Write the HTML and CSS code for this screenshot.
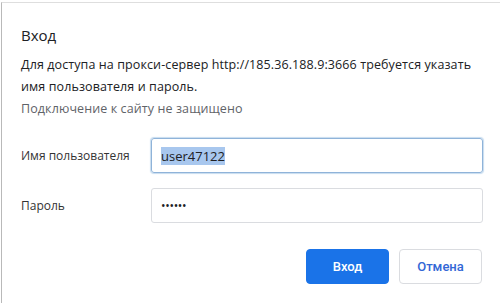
FILE: index.html
```html
<!DOCTYPE html>
<html lang="ru">
<head>
<meta charset="utf-8">
<link rel="stylesheet" href="styles.css">
</head>
<body>
<div class="dialog">
  <h1 class="title">Вход</h1>
  <p class="msg">Для доступа на прокси-сервер http://185.36.188.9:3666 требуется указать имя пользователя и пароль.</p>
  <p class="warn">Подключение к сайту не защищено</p>
  <div class="form">
    <label class="label">Имя пользователя</label>
    <div class="field focused"><span class="sel">user47122</span></div>
    <label class="label">Пароль</label>
    <div class="field"><span class="dots">••••••</span></div>
  </div>
  <div class="actions">
    <button class="btn primary">Вход</button>
    <button class="btn secondary">Отмена</button>
  </div>
</div>
</body>
</html>
```
FILE: styles.css
```css
html, body {
  margin: 0;
  padding: 0;
  background: #fff;
}
body {
  width: 500px;
  height: 303px;
  overflow: hidden;
  font-family: "Open Sans", "Noto Sans", sans-serif;
  color: #202124;
}
.dialog {
  margin: 2px 0 0 1px;
  border-left: 1px solid #b9b9b9;
  border-top: 1px solid #dedede;
  height: 301px;
  box-sizing: border-box;
  padding: 22px 18px 0 19px;
}
.title {
  margin: 0;
  font-size: 15px;
  font-weight: 400;
  line-height: 20px;
  color: #202124;
}
.msg {
  margin: 9px 0 0;
  font-size: 12.5px;
  letter-spacing: 0.1px;
  line-height: 22px;
  width: 474px;
  color: #202124;
}
.warn {
  margin: 0;
  font-size: 12.5px;
  letter-spacing: 0.1px;
  line-height: 22px;
  color: #5f6368;
}
.form {
  display: grid;
  grid-template-columns: 130px 332px;
  row-gap: 15px;
  align-items: center;
  margin-top: 18px;
}
.label {
  font-size: 12px;
  color: #333;
}
.field {
  height: 35px;
  box-sizing: border-box;
  border: 1px solid #dadce0;
  border-radius: 3px;
  display: flex;
  align-items: center;
  padding-left: 9px;
  font-size: 13px;
  color: #202124;
}
.field.focused {
  border: 1px solid #8fb3d9;
  box-shadow: 0 0 1px 1px #c7dcef;
}
.sel {
  background: #a8c7ee;
  line-height: 18px;
}
.dots {
  font-size: 12px;
  letter-spacing: -0.3px;
}
.actions {
  display: flex;
  justify-content: flex-end;
  gap: 10px;
  margin-top: 26px;
}
.btn {
  height: 35px;
  width: 83px;
  border-radius: 4px;
  font-family: "Roboto", "Open Sans", sans-serif;
  font-size: 13px;
  font-weight: 500;
  cursor: pointer;
}
.primary {
  background: #1a73e8;
  border: 1px solid #1a73e8;
  color: #fff;
}
.secondary {
  background: #fff;
  border: 1px solid #dadce0;
  color: #3367d6;
}
```
